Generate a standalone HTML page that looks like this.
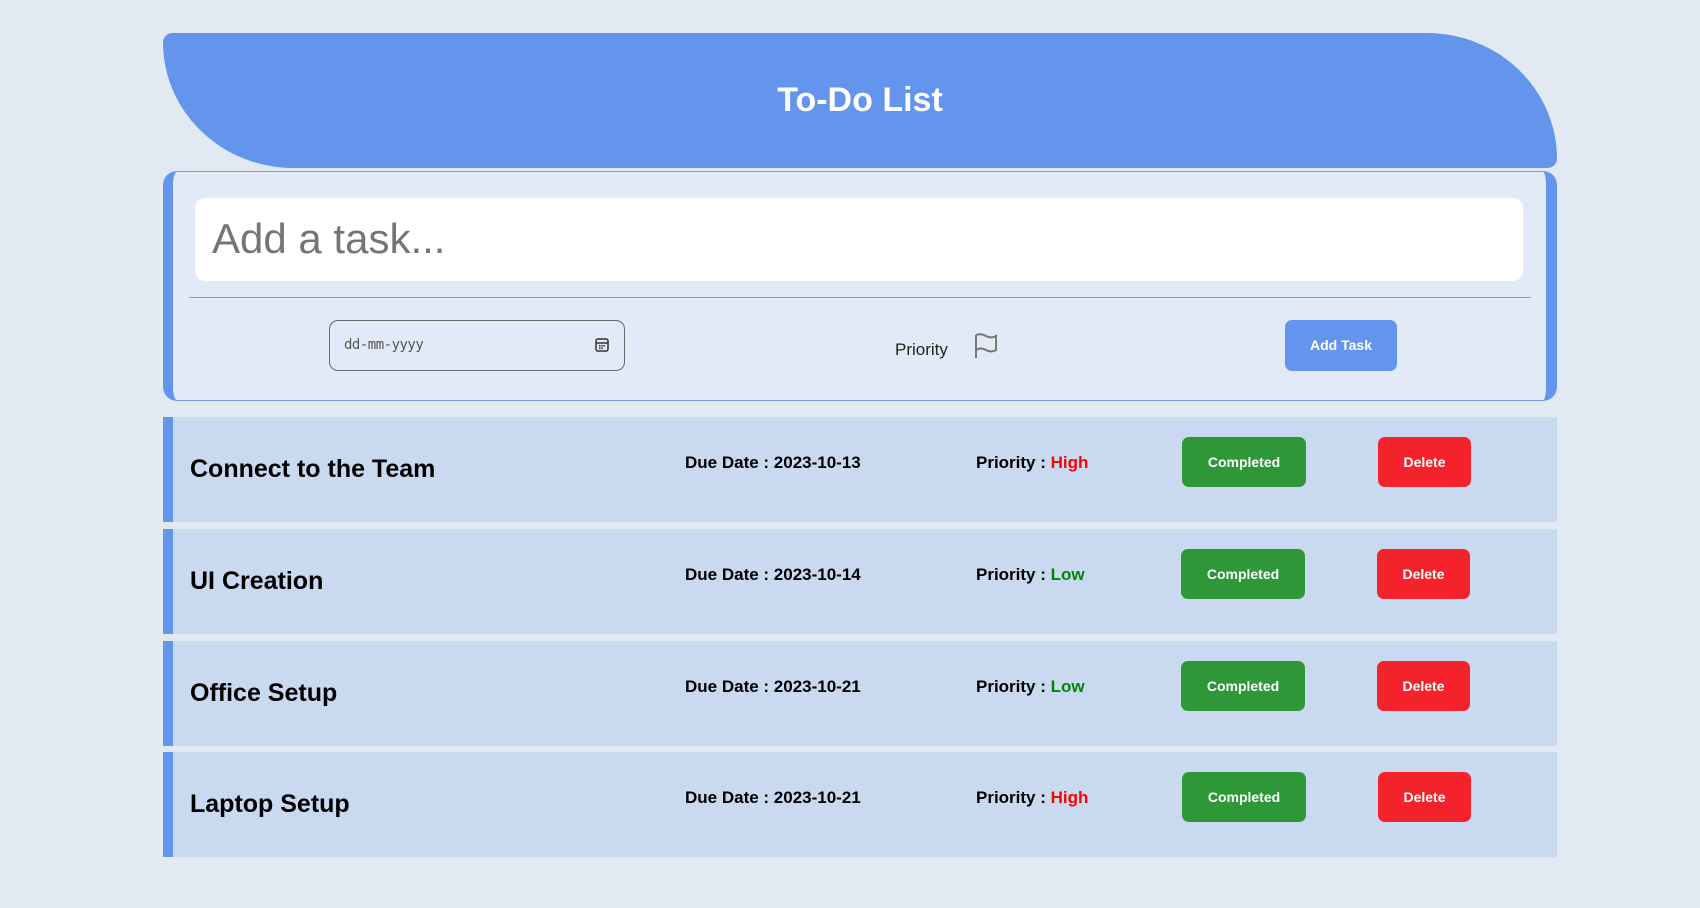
<!DOCTYPE html>
<html><head><style>
*{box-sizing:border-box;margin:0;padding:0}
body{width:1700px;height:908px;background:#e1eaf3;font-family:"Liberation Sans",Arial,sans-serif;position:relative;overflow:hidden}
.hdr{position:absolute;left:163px;top:33px;width:1394px;height:135px;background:#6495ed;border-radius:10px 140px 10px 140px/10px 135px 10px 135px;color:#fff;font-weight:bold;font-size:34px;text-align:center;line-height:134px}
.form{position:absolute;left:163px;top:171px;width:1394px;height:230px;background:#e1eaf6;border:1px solid #6f9be6;border-left:10px solid #6495ed;border-right:11px solid #6495ed;border-radius:14px}
.inp{position:absolute;left:22px;top:26px;width:1328px;height:83px;background:#fff;border-radius:10px;font-size:42px;color:#757575;padding-left:17px;line-height:81px}
.hr{position:absolute;left:16px;top:125px;width:1342px;height:1px;background:#999}
.date{position:absolute;left:156px;top:148px;width:296px;height:51px;border:1px solid #6a6a6a;border-radius:9px;font-family:"DejaVu Sans Mono",monospace;font-size:14px;color:#555;padding-left:14px;line-height:49px;letter-spacing:-0.5px}
.date svg{position:absolute;right:14px;top:16px}
.pri{position:absolute;left:722px;top:168px;font-size:17px;color:#222}
.flag{position:absolute;left:800px;top:160px}
.add{position:absolute;left:1112px;top:148px;width:112px;height:51px;background:#6495ed;border-radius:7px;color:#fff;font-weight:bold;font-size:14px;text-align:center;line-height:51px}
.row{position:absolute;left:163px;width:1394px;height:105px;background:#c8d9f0;border-left:10px solid #6495ed}
.t{position:absolute;left:17px;top:38px;font-size:25px;font-weight:bold;color:#000}
.d{position:absolute;left:512px;top:36px;font-size:17px;font-weight:bold}
.p{position:absolute;left:803px;top:36px;font-size:17px;font-weight:bold}
.hi{color:#f00}.lo{color:#080}
.c,.x{position:absolute;top:20px;height:50px;border-radius:7px;color:#fff;font-weight:bold;font-size:14px;text-align:center;line-height:50px}
.c{left:1009px;width:124px;background:#2e9738}
.x{left:1205px;width:93px;background:#f4222a}
</style></head><body>
<div class="hdr">To-Do List</div>
<div class="form">
<div class="inp">Add a task...</div>
<div class="hr"></div>
<div class="date">dd-mm-yyyy<svg width="16" height="16" viewBox="0 0 16 16"><rect x="2" y="2" width="12" height="12" rx="2" fill="none" stroke="#333" stroke-width="1.5"/><line x1="2" y1="6" x2="14" y2="6" stroke="#333" stroke-width="1.5"/><rect x="5" y="8" width="1.5" height="1.5" fill="#333"/><rect x="7.3" y="8" width="1.5" height="1.5" fill="#333"/><rect x="9.6" y="8" width="1.5" height="1.5" fill="#333"/><rect x="5" y="10.5" width="1.5" height="1.5" fill="#333"/><rect x="7.3" y="10.5" width="1.5" height="1.5" fill="#333"/></svg></div>
<div class="pri">Priority</div>
<svg class="flag" width="26" height="28" viewBox="0 0 26 28"><path d="M3 26V3 M3 3 Q8 1 13 4 Q18 7 23 4 V18 Q18 21 13 18 Q8 15 3 18" fill="none" stroke="#777" stroke-width="2"/></svg>
<div class="add">Add Task</div>
</div>
<div class="row" style="top:417px"><div class="t">Connect to the Team</div><div class="d">Due Date : 2023-10-13</div><div class="p">Priority : <span class="hi">High</span></div><div class="c">Completed</div><div class="x">Delete</div></div>
<div class="row" style="top:529px"><div class="t">UI Creation</div><div class="d">Due Date : 2023-10-14</div><div class="p">Priority : <span class="lo">Low</span></div><div class="c" style="left:1008px">Completed</div><div class="x" style="left:1204px">Delete</div></div>
<div class="row" style="top:641px"><div class="t">Office Setup</div><div class="d">Due Date : 2023-10-21</div><div class="p">Priority : <span class="lo">Low</span></div><div class="c" style="left:1008px">Completed</div><div class="x" style="left:1204px">Delete</div></div>
<div class="row" style="top:752px"><div class="t">Laptop Setup</div><div class="d">Due Date : 2023-10-21</div><div class="p">Priority : <span class="hi">High</span></div><div class="c">Completed</div><div class="x">Delete</div></div>
</body></html>
